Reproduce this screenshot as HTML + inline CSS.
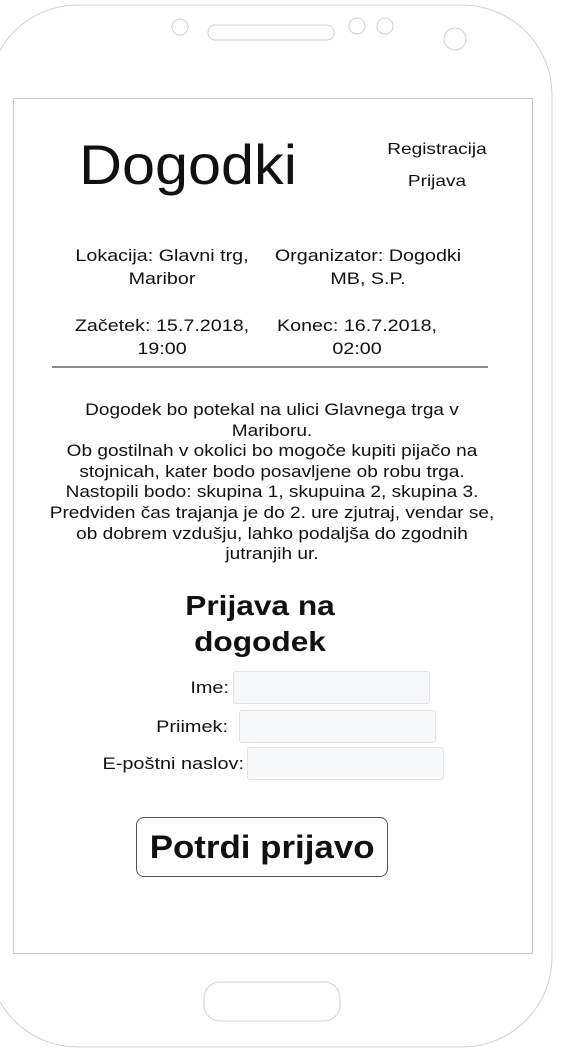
<!DOCTYPE html>
<html><head><meta charset="utf-8"><style>
html,body{margin:0;padding:0;width:563px;height:1061px;overflow:hidden;background:#fff;font-family:"Liberation Sans",Arial,sans-serif;color:#111}
.a{position:absolute;white-space:nowrap;transform:translateX(-50%) scaleX(1.16);text-align:center}
.t{font-size:17px;line-height:20px}
.r{position:absolute;white-space:nowrap;transform-origin:100% 50%;transform:translateX(-100%) scaleX(1.17);font-size:17px;line-height:20px}
.in{position:absolute;width:195px;height:31px;border:1px solid #e3e3e3;border-radius:3px;background:#f7f8fa}
</style></head><body>
<svg width="563" height="1061" style="position:absolute;left:0;top:0">
<rect x="-12" y="5" width="564" height="1042" rx="90" ry="90" fill="none" stroke="#cfcfcf" stroke-width="1"/>
<rect x="13.5" y="98.5" width="519" height="855" fill="none" stroke="#c8c8c8" stroke-width="1"/>
<circle cx="180" cy="27" r="8" fill="none" stroke="#cfcfcf"/>
<rect x="208" y="25" width="126" height="15" rx="7" fill="none" stroke="#cfcfcf"/>
<circle cx="357" cy="26" r="8" fill="none" stroke="#cfcfcf"/>
<circle cx="385" cy="26" r="8" fill="none" stroke="#cfcfcf"/>
<circle cx="455" cy="39" r="11" fill="none" stroke="#cfcfcf"/>
<rect x="204" y="982" width="136" height="39" rx="16" fill="none" stroke="#cfcfcf"/>
<line x1="52" y1="367" x2="488" y2="367" stroke="#666" stroke-width="1.5"/>
</svg>
<div class="a" style="left:188px;top:133px;font-size:56px;line-height:64px;transform:translateX(-50%) scaleX(1.06)">Dogodki</div>
<div class="a t" style="left:437px;top:140px;font-size:16px;transform:translateX(-50%) scaleX(1.19)">Registracija</div>
<div class="a t" style="left:437px;top:172px;font-size:16px;transform:translateX(-50%) scaleX(1.19)">Prijava</div>
<div class="a t" style="left:162px;top:246px">Lokacija: Glavni trg,</div>
<div class="a t" style="left:162px;top:269px">Maribor</div>
<div class="a t" style="left:368px;top:246px">Organizator: Dogodki</div>
<div class="a t" style="left:368px;top:269px">MB, S.P.</div>
<div class="a t" style="left:162px;top:316px">Začetek: 15.7.2018,</div>
<div class="a t" style="left:162px;top:339px">19:00</div>
<div class="a t" style="left:357px;top:316px">Konec: 16.7.2018,</div>
<div class="a t" style="left:357px;top:339px">02:00</div>
<div class="a t" style="left:272px;top:400px;line-height:20.6px;transform:translateX(-50%) scaleX(1.12)">Dogodek bo potekal na ulici Glavnega trga v<br>Mariboru.<br>Ob gostilnah v okolici bo mogoče kupiti pijačo na<br>stojnicah, kater bodo posavljene ob robu trga.<br>Nastopili bodo: skupina 1, skupuina 2, skupina 3.<br>Predviden čas trajanja je do 2. ure zjutraj, vendar se,<br>ob dobrem vzdušju, lahko podaljša do zgodnih<br>jutranjih ur.</div>
<div class="a" style="left:260px;top:588px;font-size:28px;line-height:36px;font-weight:bold;transform:translateX(-50%) scaleX(1.13)">Prijava na<br>dogodek</div>
<div class="r" style="left:229px;top:678px">Ime:</div>
<div class="in" style="left:233px;top:671px"></div>
<div class="r" style="left:228px;top:717px">Priimek:</div>
<div class="in" style="left:239px;top:710px"></div>
<div class="r" style="left:244px;top:754px">E-poštni naslov:</div>
<div class="in" style="left:247px;top:747px"></div>
<div style="position:absolute;left:136px;top:817px;width:250px;height:58px;border:1px solid #555;border-radius:8px;text-align:center;font-weight:bold;font-size:32px;line-height:58px"><span style="display:inline-block;transform:scaleX(1.09)">Potrdi prijavo</span></div>
</body></html>
